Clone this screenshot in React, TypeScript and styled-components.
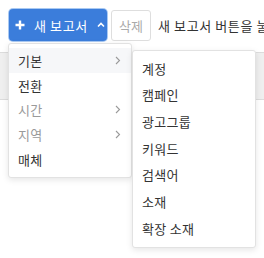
import React from "react";
import styled, { createGlobalStyle } from "styled-components";

const Global = createGlobalStyle`
  html, body { margin: 0; padding: 0; background: #fff; }
  body { font-family: "Noto Sans CJK KR", "Noto Sans", sans-serif; font-size: 13px; color: #333; overflow: hidden; }
  * { box-sizing: border-box; }
`;

const Page = styled.div`
  width: 264px;
  height: 258px;
  position: relative;
  overflow: hidden;
`;

const Toolbar = styled.div`
  display: flex;
  align-items: center;
  padding: 9px 0 0 9px;
  height: 41px;
  white-space: nowrap;
`;

const Anchor = styled.div`
  position: relative;
  z-index: 2;
  flex-shrink: 0;
`;

const PrimaryButton = styled.button`
  display: flex;
  align-items: center;
  height: 32px;
  width: 98px;
  padding: 0 0 0 6px;
  border: none;
  border-radius: 4px;
  background: #3b7ddb;
  color: #fff;
  font-family: inherit;
  font-size: 13px;
  box-shadow: 0 0 0 1px #a9c9f2;
`;

const Label = styled.span`
  margin: 0 9px 0 9px;
  letter-spacing: 0.6px;
`;

const GhostButton = styled.button`
  flex-shrink: 0;
  height: 31px;
  width: 40px;
  margin-left: 4px;
  padding: 0;
  border: 1px solid #dedede;
  border-radius: 3px;
  background: #fff;
  color: #aaa;
  font-family: inherit;
  font-size: 13px;
  align-self: flex-start;
  margin-top: 1px;
`;

const Hint = styled.span`
  flex-shrink: 0;
  margin-left: 7px;
  color: #333;
  font-size: 13px;
  letter-spacing: 0.6px;
`;

const Band = styled.div`
  margin-top: 11px;
  height: 48px;
  background: #efefef;
  border-top: 1px solid #dcdcdc;
  border-bottom: 1px solid #dcdcdc;
`;

const Menu = styled.div<{ $top: number; $left: number; $width: number }>`
  position: absolute;
  top: ${(p) => p.$top}px;
  left: ${(p) => p.$left}px;
  width: ${(p) => p.$width}px;
  background: #fff;
  border: 1px solid #e2e2e2;
  border-radius: 3px;
  box-shadow: 0 2px 6px rgba(0, 0, 0, 0.1);
  padding: 4px 0 5px;
`;

const Item = styled.div<{ $muted?: boolean; $active?: boolean; $h: number }>`
  display: flex;
  align-items: center;
  justify-content: space-between;
  height: ${(p) => p.$h}px;
  padding: 0 10px 0 9px;
  color: ${(p) => (p.$muted ? "#9a9a9a" : "#333")};
  background: ${(p) => (p.$active ? "#f6f7f9" : "transparent")};
  font-size: 13px;
  letter-spacing: 0.3px;
  position: relative;
`;

const Chevron = () => (
  <svg width="6" height="9" viewBox="0 0 6 9">
    <path d="M1 1l3.5 3.5L1 8" fill="none" stroke="#9a9a9a" strokeWidth="1.1" />
  </svg>
);

const Plus = () => (
  <svg width="10" height="10" viewBox="0 0 10 10">
    <path d="M5 0.5v9M0.5 5h9" stroke="#fff" strokeWidth="2.4" />
  </svg>
);

const ChevronUp = () => (
  <svg width="8" height="6" viewBox="0 0 8 6">
    <path d="M1 4.5L4 1.5l3 3" fill="none" stroke="#fff" strokeWidth="1.6" />
  </svg>
);

const mainItems = [
  { label: "기본", sub: true, active: true },
  { label: "전환" },
  { label: "시간", sub: true, muted: true },
  { label: "지역", sub: true, muted: true },
  { label: "매체" },
];

const subItems = ["계정", "캠페인", "광고그룹", "키워드", "검색어", "소재", "확장 소재"];

export default function App() {
  return (
    <Page>
      <Global />
      <Toolbar>
        <Anchor>
          <PrimaryButton>
            <Plus />
            <Label>새 보고서</Label>
            <ChevronUp />
          </PrimaryButton>
          <Menu $top={34} $left={-1} $width={124}>
            {mainItems.map((it) => (
              <Item key={it.label} $h={24.8} $muted={it.muted} $active={it.active}>
                {it.label}
                {it.sub && <Chevron />}
              </Item>
            ))}
            <Menu $top={6} $left={123} $width={124}>
              {subItems.map((s) => (
                <Item key={s} $h={26.67}>
                  {s}
                </Item>
              ))}
            </Menu>
          </Menu>
        </Anchor>
        <GhostButton>삭제</GhostButton>
        <Hint>새 보고서 버튼을 눌러</Hint>
      </Toolbar>
      <Band />
    </Page>
  );
}
